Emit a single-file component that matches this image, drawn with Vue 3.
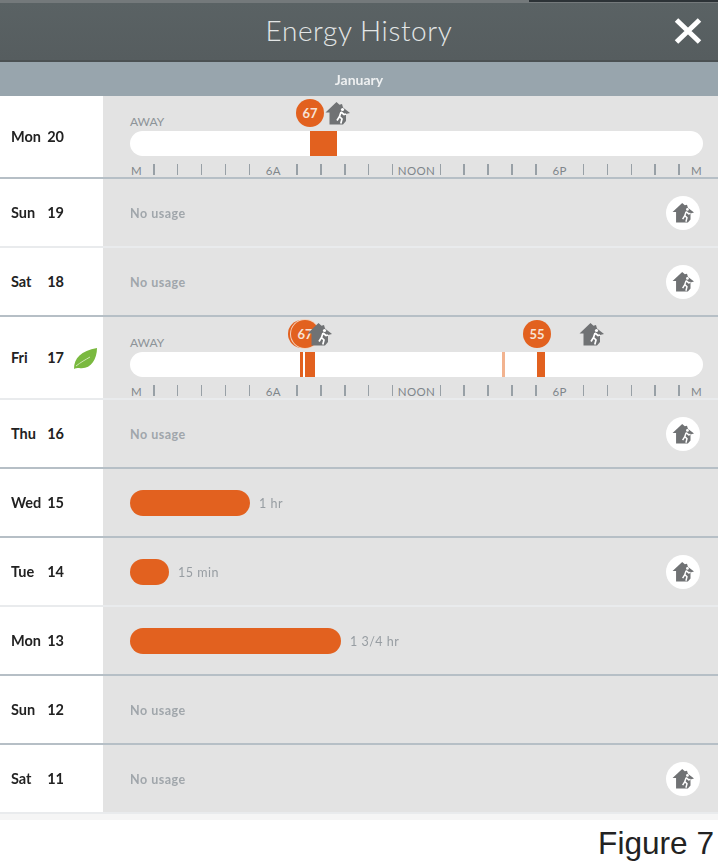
<template>
  <div class="page">
    <svg class="defs" width="0" height="0" aria-hidden="true">
      <symbol id="home-away" viewBox="0 0 26 24">
        <path d="M0.5 11.5 L11.5 1 L14.5 3.8 L17 3 L18 6.5 L25 12 L21 13 L21 20 L18 23.5 L4.5 23.5 L4.5 11.5 Z" fill="#707274" />
        <circle cx="17.5" cy="8.5" r="1.6" fill="#fff" />
        <path d="M16 11 L14.5 15.5 L17 18 L15.8 22.5 M14.5 15.5 L12 19.5 M16 11 L19 13.5 L21 13" fill="none" stroke="#fff" stroke-width="1.7" />
      </symbol>
    </svg>

    <div class="screen">
      <header class="topbar">
        <span class="top-edge"></span>
        <h1 class="title">Energy History</h1>
        <svg class="close" viewBox="0 0 28 26" width="28" height="26">
          <path d="M2.5 2 L25.5 24 M25.5 2 L2.5 24" stroke="#fff" stroke-width="5" fill="none" />
        </svg>
      </header>
      <div class="month">January</div>

      <div v-for="row in rows" :key="row.day + row.num" class="row" :class="{ strong: row.strong, tall: row.marks }">
        <div class="date">
          <span class="date-text"><span>{{ row.day }}</span><span>{{ row.num }}</span></span>
          <svg v-if="row.leaf" class="leaf" viewBox="0 0 24 22" width="24" height="22">
            <path d="M1 21 C1 10 8 3 24 0 C24 12 17 22 6 20 C4 20 2 20 1 21 Z" fill="#7ab93f" />
            <path d="M3 18 C8 14 12 12 17 9" stroke="#cfe6b5" stroke-width="1" fill="none" />
          </svg>
        </div>

        <div v-if="row.marks" class="usage timeline">
          <div class="away">AWAY</div>
          <div class="track">
            <i
              v-for="bar in row.marks.bars"
              :key="bar.x"
              class="block"
              :class="{ faint: bar.faint }"
              :style="{ left: bar.x + 'px', width: bar.w + 'px' }"
            ></i>
          </div>
          <span
            v-for="pin in row.marks.temps"
            :key="pin.x"
            class="temp"
            :class="{ behind: !pin.label }"
            :style="{ left: pin.x + 'px' }"
          >{{ pin.label }}</span>
          <svg
            v-for="x in row.marks.homes"
            :key="x"
            class="pin-home"
            :style="{ left: x + 'px' }"
            width="26"
            height="24"
          ><use href="#home-away" /></svg>
          <div class="scale">
            <span v-for="(label, i) in scale" :key="i" class="mark" :class="{ first: i === 0, last: i === 24 }">
              <template v-if="label">{{ label }}</template>
              <i v-else class="tick"></i>
            </span>
          </div>
        </div>

        <div v-else class="usage">
          <template v-if="row.width">
            <div class="bar" :style="{ width: row.width + 'px' }"></div>
            <span class="amount">{{ row.text }}</span>
          </template>
          <span v-else class="none">No usage</span>
          <span v-if="row.home" class="home-btn">
            <svg width="23" height="21"><use href="#home-away" /></svg>
          </span>
        </div>
      </div>
      <div class="end"></div>
    </div>

    <div class="figure">Figure 7</div>
  </div>
</template>

<script setup>
const rows = [
  {
    day: 'Mon', num: '20', strong: true,
    marks: {
      bars: [{ x: 180, w: 27 }],
      temps: [{ x: 193, label: '67' }],
      homes: [222],
    },
  },
  { day: 'Sun', num: '19', home: true },
  { day: 'Sat', num: '18', home: true, strong: true },
  {
    day: 'Fri', num: '17', leaf: true,
    marks: {
      bars: [
        { x: 170, w: 3 },
        { x: 175, w: 10 },
        { x: 372, w: 3, faint: true },
        { x: 407, w: 8 },
      ],
      temps: [
        { x: 185, label: '' },
        { x: 188, label: '67' },
        { x: 420, label: '55' },
      ],
      homes: [204, 476],
    },
  },
  { day: 'Thu', num: '16', home: true, strong: true },
  { day: 'Wed', num: '15', width: 120, text: '1 hr', strong: true },
  { day: 'Tue', num: '14', width: 39, text: '15 min', home: true },
  { day: 'Mon', num: '13', width: 211, text: '1 3/4 hr', strong: true },
  { day: 'Sun', num: '12', strong: true },
  { day: 'Sat', num: '11', home: true, last: true },
];

// one slot per hour, midnight to midnight
const scale = Array.from({ length: 25 }, (_, i) => {
  if (i === 0 || i === 24) return 'M';
  if (i === 6) return '6A';
  if (i === 12) return 'NOON';
  if (i === 18) return '6P';
  return '';
});
</script>

<style>
body {
  background: #fff;
}
</style>

<style scoped>
.page {
  width: 718px;
  height: 861px;
  overflow: hidden;
  font-family: Lato, "Open Sans", sans-serif;
}

.defs {
  position: absolute;
}

.screen {
  filter: blur(0.7px);
}

.topbar {
  position: relative;
  display: grid;
  grid-template-columns: 1fr auto 1fr;
  align-items: center;
  height: 62px;
  box-sizing: border-box;
  padding: 0 16px 4px;
  background: linear-gradient(#5a6264, #565d5f);
  border-top: 3px solid #74797b;
  border-bottom: 2px solid #4b5153;
}

.top-edge {
  position: absolute;
  top: -3px;
  right: 0;
  width: 189px;
  height: 2px;
  background: #2c3236;
}

.title {
  grid-column: 2;
  margin: 0;
  font-size: 28px;
  font-weight: 300;
  letter-spacing: 0.6px;
  color: #e3e6e6;
}

.close {
  grid-column: 3;
  justify-self: end;
  margin-top: 3px;
}

.month {
  height: 34px;
  line-height: 35px;
  text-align: center;
  font-size: 14px;
  font-weight: 700;
  color: #eef0f1;
  background: #98a5ad;
}

.row {
  display: flex;
  height: 69px;
  box-sizing: border-box;
  border-bottom: 2px solid #e9ebed;
}

.row.tall {
  height: 83px;
}

.row.strong {
  border-bottom-color: #b6bfc6;
}

.date {
  width: 103px;
  flex-shrink: 0;
  box-sizing: border-box;
  padding-left: 11px;
  display: flex;
  align-items: center;
  gap: 9px;
  background: #fff;
}

.date-text {
  width: 53px;
  display: flex;
  justify-content: space-between;
  font-size: 14.5px;
  font-weight: 700;
  color: #222;
}

.leaf {
  margin-top: 2px;
}

.usage {
  flex: 1;
  display: flex;
  align-items: center;
  padding: 0 18px 0 27px;
  background: #e3e3e3;
}

.none {
  margin-top: 2px;
  font-size: 12.5px;
  font-weight: 700;
  letter-spacing: 0.5px;
  color: #a0a6ab;
}

.amount {
  margin-left: 9px;
  margin-top: 1px;
  font-size: 12.5px;
  font-weight: 400;
  letter-spacing: 0.5px;
  color: #979da2;
}

.bar {
  height: 26px;
  margin-top: 1px;
  border-radius: 13px;
  background: #e2611f;
}

.home-btn {
  margin-left: auto;
  width: 34px;
  height: 34px;
  border-radius: 50%;
  background: #fff;
  display: flex;
  align-items: center;
  justify-content: center;
}

.timeline {
  display: block;
  position: relative;
  padding: 18px 15px 0 27px;
}

.away {
  height: 17px;
  line-height: 15px;
  font-size: 12px;
  font-weight: 400;
  color: #8d9398;
}

.track {
  position: relative;
  height: 25px;
  border-radius: 13px;
  background: #fff;
  overflow: hidden;
}

.block {
  position: absolute;
  top: 0;
  bottom: 0;
  background: #e2611f;
}

.block.faint {
  background: #f2b38f;
}

.temp {
  position: absolute;
  top: 3px;
  width: 28px;
  height: 28px;
  border-radius: 50%;
  text-align: center;
  line-height: 28px;
  font-size: 13px;
  font-weight: 700;
  color: #f7e3d6;
  background: #e2611f;
}

.temp.behind + .temp {
  box-shadow: 0 0 0 1px #f3d2bd;
}

.pin-home {
  position: absolute;
  top: 5px;
}

.scale {
  display: flex;
  height: 21px;
  margin: 0 -12px;
  align-items: flex-end;
}

.mark {
  flex: 1 1 0;
  min-width: 0;
  height: 13px;
  display: flex;
  justify-content: center;
  align-items: flex-start;
  white-space: nowrap;
  font-size: 11.5px;
  line-height: 13px;
  letter-spacing: 0.3px;
  color: #7f868b;
}

.mark.first {
  justify-content: flex-end;
}

.mark.last {
  justify-content: flex-start;
}

.tick {
  width: 1.5px;
  height: 11px;
  background: #98a0a6;
}

.end {
  height: 6px;
  background: #f5f5f5;
}

.figure {
  margin-top: 5px;
  padding-right: 4px;
  text-align: right;
  font-family: "Liberation Sans", Arial, sans-serif;
  font-size: 31.6px;
  line-height: 36px;
  color: #222;
}
</style>
